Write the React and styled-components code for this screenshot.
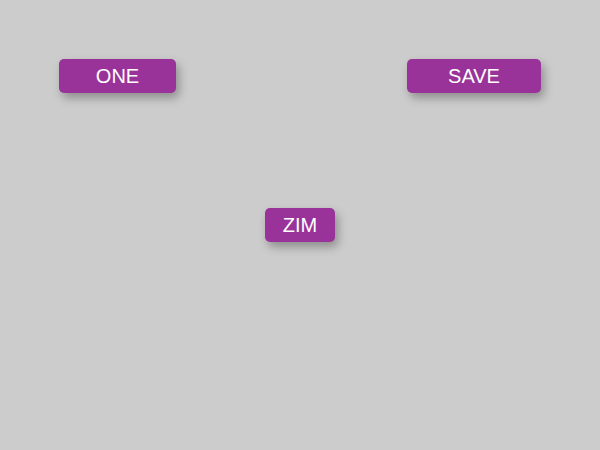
import React from "react";
import styled, { createGlobalStyle } from "styled-components";

const Global = createGlobalStyle`
  html, body { margin: 0; padding: 0; background: #cccccc; }
  body { font-family: "Liberation Sans", Arial, sans-serif; }
`;

const Stage = styled.div`
  width: 600px;
  height: 450px;
  box-sizing: border-box;
  padding: 59px 59px 0;
  display: flex;
  flex-direction: column;
  background: #cccccc;
`;

const TopRow = styled.div`
  display: flex;
  justify-content: space-between;
  align-items: flex-start;
`;

const CenterRow = styled.div`
  display: flex;
  justify-content: center;
  margin-top: 115px;
`;

const Button = styled.button`
  width: ${(p) => p.$w}px;
  height: 34px;
  padding: 0;
  border: none;
  border-radius: 5px;
  background: #993399;
  color: #ffffff;
  font-family: "Liberation Sans", Arial, sans-serif;
  font-size: 20px;
  line-height: 34px;
  text-align: center;
  box-shadow: 3px 5px 10px rgba(0, 0, 0, 0.3);
  cursor: pointer;
`;

export default function App() {
  return (
    <>
      <Global />
      <Stage>
        <TopRow>
          <Button $w={117}>ONE</Button>
          <Button $w={134}>SAVE</Button>
        </TopRow>
        <CenterRow>
          <Button $w={70}>ZIM</Button>
        </CenterRow>
      </Stage>
    </>
  );
}
